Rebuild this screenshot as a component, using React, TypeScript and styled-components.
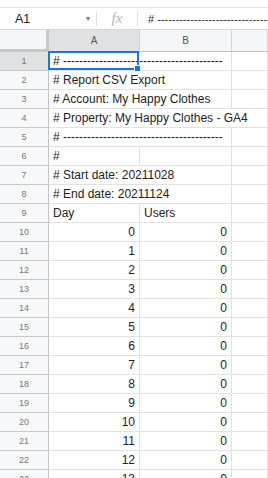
import styled, { createGlobalStyle } from "styled-components"

const GlobalStyle = createGlobalStyle`
  html, body {
    margin: 0;
    padding: 0;
    background: #ffffff;
  }
  body {
    font-family: "Liberation Sans", Arial, sans-serif;
    color: #222;
    overflow: hidden;
  }
`

const COLS = "49px 91px 92px 1fr"
const DASHES = "# " + "-".repeat(40)

type CellData = { text: string; span?: number; right?: boolean }

const rows: CellData[][] = [
  [{ text: DASHES, span: 2 }],
  [{ text: "# Report CSV Export", span: 2 }],
  [{ text: "# Account: My Happy Clothes", span: 2 }],
  [{ text: "# Property: My Happy Clothes - GA4", span: 3 }],
  [{ text: DASHES, span: 2 }],
  [{ text: "#" }, { text: "" }],
  [{ text: "# Start date: 20211028", span: 2 }],
  [{ text: "# End date: 20211124", span: 2 }],
  [{ text: "Day" }, { text: "Users" }],
  ...Array.from({ length: 14 }, (_, i) => [
    { text: String(i), right: true },
    { text: "0", right: true },
  ]),
]

export default function App() {
  return (
    <Page>
      <GlobalStyle />
      <TopStrip />
      <FormulaBar>
        <NameBox>
          <CellRef>A1</CellRef>
          <Caret>▾</Caret>
        </NameBox>
        <BarDivider />
        <FxLabel>fx</FxLabel>
        <BarDivider />
        <FormulaText>{"# " + "-".repeat(60)}</FormulaText>
      </FormulaBar>

      <Sheet>
        <HeaderRow>
          <Corner />
          <ColHead selected>A</ColHead>
          <ColHead>B</ColHead>
          <ColHead />
        </HeaderRow>

        {rows.map((cells, r) => {
          const used = cells.reduce((n, c) => n + (c.span || 1), 0)
          const fill = Math.max(0, 3 - used)
          return (
            <DataRow key={r}>
              <RowHead selected={r === 0}>{r + 1}</RowHead>
              {cells.map((c, i) => (
                <Cell key={i} span={c.span || 1} right={c.right}>
                  {c.text}
                  {r === 0 && i === 0 && (
                    <Selection>
                      <Handle />
                    </Selection>
                  )}
                </Cell>
              ))}
              {Array.from({ length: fill }, (_, i) => (
                <Cell key={"f" + i} span={1} />
              ))}
            </DataRow>
          )
        })}
      </Sheet>
    </Page>
  )
}

const Page = styled.div`
  width: 268px;
  height: 478px;
  overflow: hidden;
  background: #fff;
`

const TopStrip = styled.div`
  height: 7px;
  border-bottom: 1px solid #e3e3e3;
`

const FormulaBar = styled.div`
  display: flex;
  align-items: center;
  height: 21px;
  border-bottom: 1px solid #d6d6d6;
  font-size: 12px;
`

const NameBox = styled.div`
  width: 96px;
  display: flex;
  align-items: center;
  justify-content: space-between;
  padding: 0 6px 0 15px;
  box-sizing: border-box;
`

const CellRef = styled.span`
  color: #222;
  font-size: 12.5px;
`

const Caret = styled.span`
  color: #777;
  font-size: 8px;
`

const BarDivider = styled.div`
  width: 1px;
  height: 14px;
  background: #e0e0e0;
`

const FxLabel = styled.span`
  width: 40px;
  text-align: center;
  font-family: "Liberation Serif", serif;
  font-style: italic;
  font-size: 15px;
  color: #b8b8b8;
`

const FormulaText = styled.span`
  flex: 1;
  padding-left: 10px;
  white-space: nowrap;
  overflow: hidden;
  color: #333;
  font-size: 11px;
`

const Sheet = styled.div`
  display: flex;
  flex-direction: column;
`

const HeaderRow = styled.div`
  display: grid;
  grid-template-columns: ${COLS};
  height: 21px;
  background: #f5f6f7;
  border-bottom: 1px solid #c4c4c4;
`

const Corner = styled.div`
  border-right: 3px solid #c8c8c8;
  border-bottom: 3px solid #c8c8c8;
  margin-bottom: -1px;
  background: #f5f6f7;
`

const ColHead = styled.div<{ selected?: boolean }>`
  display: flex;
  align-items: center;
  justify-content: center;
  font-size: 10px;
  color: #555;
  background: ${(p) => (p.selected ? "#e0e1e2" : "#f5f6f7")};
  border-right: 1px solid #d4d4d4;
`

const DataRow = styled.div`
  display: grid;
  grid-template-columns: ${COLS};
  height: 19px;
`

const RowHead = styled.div<{ selected?: boolean }>`
  display: flex;
  align-items: center;
  justify-content: center;
  font-size: 9px;
  color: #777;
  background: ${(p) => (p.selected ? "#e0e1e2" : "#f7f8f9")};
  border-right: 1px solid #c4c4c4;
  border-bottom: 1px solid #c8c8c8;
`

const Cell = styled.div<{ span?: number; right?: boolean }>`
  position: relative;
  grid-column: span ${(p) => p.span || 1};
  display: flex;
  align-items: center;
  justify-content: ${(p) => (p.right ? "flex-end" : "flex-start")};
  padding: 0 4px;
  font-size: 12px;
  color: #222;
  white-space: nowrap;
  border-right: 1px solid #e2e2e2;
  border-bottom: 1px solid #e2e2e2;
`

const Selection = styled.div`
  position: absolute;
  left: -1px;
  top: -1px;
  width: 91px;
  height: 19px;
  box-sizing: border-box;
  border: 2px solid #1a73e8;
  pointer-events: none;
`

const Handle = styled.div`
  position: absolute;
  right: -4px;
  bottom: -4px;
  width: 5px;
  height: 5px;
  background: #1a73e8;
  border: 1px solid #fff;
`
